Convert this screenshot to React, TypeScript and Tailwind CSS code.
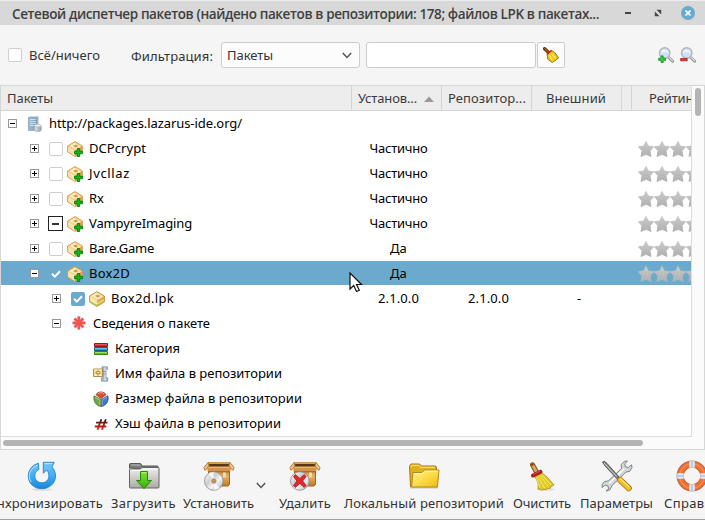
import { useLayoutEffect, useRef, useState, type ReactNode } from 'react';

/* Text that spreads its letters evenly over a given width. */
function Label({ children, w, className = '' }: { children: string; w: number; className?: string }) {
  const ref = useRef<HTMLSpanElement>(null);
  const [spacing, setSpacing] = useState(0);
  useLayoutEffect(() => {
    if (ref.current) setSpacing((w - ref.current.getBoundingClientRect().width) / children.length);
  }, [w, children]);
  return (
    <span ref={ref} className={`shrink-0 whitespace-pre ${className}`} style={{ letterSpacing: spacing }}>
      {children}
    </span>
  );
}

function Defs() {
  return (
    <svg className="absolute h-0 w-0">
      <defs>
        <linearGradient id="star" x1="0" y1="0" x2="0" y2="1"><stop stopColor="#cacaca" /><stop offset="1" stopColor="#b0b0b0" /></linearGradient>
        <linearGradient id="blue" x1="0" y1="0" x2="0" y2="1"><stop stopColor="#7cc8fb" /><stop offset=".5" stopColor="#43aef5" /><stop offset="1" stopColor="#1685dd" /></linearGradient>
        <linearGradient id="gray" x1="0" y1="0" x2="0" y2="1"><stop stopColor="#eeeeec" /><stop offset="1" stopColor="#aaaaa7" /></linearGradient>
        <linearGradient id="green" x1="0" y1="0" x2="0" y2="1"><stop stopColor="#80e52d" /><stop offset="1" stopColor="#35ae0a" /></linearGradient>
        <linearGradient id="yellow" x1="0" y1="0" x2="1" y2="1"><stop stopColor="#fff38a" /><stop offset=".5" stopColor="#fbdc4a" /><stop offset="1" stopColor="#efb90c" /></linearGradient>
        <linearGradient id="wood" x1="0" y1="0" x2="0" y2="1"><stop stopColor="#b87428" /><stop offset=".5" stopColor="#e3b064" /><stop offset="1" stopColor="#bd7927" /></linearGradient>
        <linearGradient id="disc" x1="0" y1="0" x2="1" y2="1"><stop stopColor="#fff" /><stop offset=".4" stopColor="#cfcfcf" /><stop offset=".6" stopColor="#f4f4f4" /><stop offset="1" stopColor="#aaa" /></linearGradient>
        <linearGradient id="server" x1="0" y1="0" x2="1" y2="0"><stop stopColor="#9dbbd2" /><stop offset="1" stopColor="#7d9fba" /></linearGradient>
        <linearGradient id="cyl" x1="0" y1="0" x2="1" y2="0"><stop stopColor="#dfe5ea" /><stop offset="1" stopColor="#93a1ad" /></linearGradient>
      </defs>
    </svg>
  );
}

function PackageIcon({ plus }: { plus?: boolean }) {
  return (
    <svg viewBox="0 0 16 16" className="h-4 w-4 shrink-0">
      <path d="M.6 5 8 .6 15.400 5v6L8 15.500.6 11z" fill={plus ? '#eebf6c' : '#ecca6e'} stroke={plus ? '#cf9a4c' : '#b8913c'} strokeWidth=".9" />
      <path d="M1.200 5.600 8 9.400v5.500L1.200 10.800z" fill="#fae3ae" />
      <path d="M8 9.400 14.900 5.600v5.200L8 14.900z" fill={plus ? '#dfa14b' : '#dcae4c'} />
      <path d="M1.600 5.200 8 1.400l6.400 3.800L8 8.800z" fill="#f8e2a8" />
      <path d="m3.800 4 6.300 3.600M6.200 2.600l6.300 3.600" fill="none" stroke="#fff8e0" strokeWidth="1.100" />
      <path d="M6 5 8.700 3.600l2.800 1.500-2.700 1.600z" fill="#d89c45" />
      {!plus && <path d="m1.300 10 6.700 3.700 6.800-3.700v1.100L8 15l-6.700-3.900z" fill="#9dcb44" />}
      {!plus && <path d="m1.300 9 6.700 3.900 6.800-3.900" fill="none" stroke="#fff2c0" strokeWidth=".8" />}
      {plus && <path d="M10.300 7.500h2.400v2.800h2.800v2.400h-2.800v2.800h-2.400v-2.800H7.500v-2.400h2.800z" fill="#12b81a" stroke="#067c10" strokeWidth=".9" />}
    </svg>
  );
}

function ServerIcon() {
  return (
    <svg viewBox="0 0 16 16" className="h-4 w-4 shrink-0">
      <path d="M2 1.200 3 .3h8l-.5 1z" fill="#c6d8e6" />
      <path d="M1.400 1.400h8.800v13H1.400z" fill="url(#server)" stroke="#84a3bb" strokeWidth=".8" />
      <path d="M10.200 1.400 11 .5v9" fill="none" stroke="#88a7bf" strokeWidth=".9" />
      <path d="M3 3.500h5.800M3 5.500h5.800M3 7.500h5.800M3 9.500h4" stroke="#d7e6f1" strokeWidth=".9" />
      <path d="M7.400 9.600v4.500c0 1.900 6.800 1.900 6.800 0V9.600z" fill="url(#cyl)" stroke="#9aa7b2" strokeWidth=".7" />
      <ellipse cx="10.800" cy="9.600" rx="3.400" ry="1.400" fill="#e9eef2" stroke="#a9b5bf" strokeWidth=".6" />
    </svg>
  );
}

function AsteriskIcon() {
  return (
    <svg viewBox="0 0 16 16" className="h-4 w-4 shrink-0">
      <path d="M8 1.300v13.500M1.500 8h13.200M3.500 3.500l9 9M12.500 3.500l-9 9" stroke="#c9bdbd" strokeWidth="3.300" />
      <path d="M7.800 1.600v12.600M1.700 7.900h12.400M3.500 3.500l8.600 8.600M12.100 3.500l-8.600 8.600" stroke="#f4534e" strokeWidth="2.300" />
    </svg>
  );
}

function CategoryIcon() {
  return (
    <svg viewBox="0 0 16 16" className="h-4 w-4 shrink-0">
      <path d="M1.500 2.500h13v3h-13z" fill="#e0202e" stroke="#a0141f" /><path d="M2 3.500h12" stroke="#f0606a" strokeWidth=".8" />
      <path d="M1.500 6.500h13v3h-13z" fill="#21a5db" stroke="#145f86" /><path d="M2 7.500h12" stroke="#70d2fb" strokeWidth=".8" />
      <path d="M1.500 10.500h13v3h-13z" fill="#61c329" stroke="#3b8014" /><path d="M2 11.500h12" stroke="#a5ec6c" strokeWidth=".8" />
    </svg>
  );
}

function ArchiveIcon() {
  return (
    <svg viewBox="0 0 16 16" className="h-4 w-4 shrink-0">
      <path d="M9 .8h5.500v2.400H13v8.600h1.800v3.400H8.500v-3.400H10V3.200H9z" fill="#a9bccd" stroke="#8095a8" strokeWidth=".8" />
      <path d="M12 1.500v13" stroke="#dfe8ef" strokeWidth="1.200" />
      <path d="M10 5.500h3M10 8h3" stroke="#7e93a6" strokeWidth=".8" />
      <path d="M.5 3h9v7.500h-9z" fill="#f3dc97" stroke="#a8823c" strokeWidth=".9" />
      <path d="M1.200 4h7.600M1.200 9.300h7.600" stroke="#fff4c8" /><path d="M5 3.500v6.500" stroke="#b8903f" strokeWidth=".8" />
      <path d="M3.200 5.700h3.600v2H3.200z" fill="#fff6d2" stroke="#8b6427" strokeWidth=".7" />
    </svg>
  );
}

function SizeIcon() {
  return (
    <svg viewBox="0 0 16 16" className="h-4 w-4 shrink-0">
      <path d="m8.300 8.500 6.600-3.700c1.200 5-1.500 9.700-6.600 10.700z" fill="#3f78c6" stroke="#28508c" strokeWidth=".8" />
      <path d="M7.700 8.500 1.100 4.800C0 9.800 2.600 14.500 7.700 15.500z" fill="#6fa644" stroke="#44702a" strokeWidth=".8" />
      <path d="M8 7.500 3 3.700C5 .1 11 .1 13 3.700z" fill="#dc4f35" stroke="#93301d" strokeWidth=".8" />
      <path d="M4.800 2.900c1.900-1.600 4.500-1.600 6.400 0" fill="none" stroke="#f6a48d" />
      <path d="m2 6.300 4.800 2.700v5.300" fill="none" stroke="#bfdca4" strokeWidth=".7" />
      <path d="M14 6.300 9.200 9v5.300" fill="none" stroke="#9fc0ec" strokeWidth=".7" />
    </svg>
  );
}

function HashIcon() {
  return (
    <svg viewBox="0 0 16 16" className="h-4 w-4 shrink-0">
      <defs><linearGradient id="hash" gradientUnits="userSpaceOnUse" x1="0" y1="3" x2="0" y2="14"><stop stopColor="#341818" /><stop offset="1" stopColor="#f42116" /></linearGradient></defs>
      <path d="M8.300 3.300 4.500 13.700M12.800 3.300 9 13.700M3 6.600h11.500M1.800 10.500h11.500" stroke="url(#hash)" strokeWidth="1.800" />
    </svg>
  );
}

function BroomSmall() {
  return (
    <svg viewBox="0 0 16 16" className="h-4 w-4">
      <path d="m1.600 1.700 3.800 3.600" stroke="#6e3a12" strokeWidth="3.400" strokeLinecap="round" />
      <path d="m1.700 1.500 3.300 3.200" stroke="#b5712e" strokeLinecap="round" />
      <path d="M4.200 7.200 8.700 3.600l3 1.800 4 5.600-6.400 4.600-4.600-3.400z" fill="#ecca1c" stroke="#8d6c10" strokeWidth=".9" />
      <path d="m6.600 8.300 2.600 4.800M8.800 6.800l3.700 4.600" stroke="#fbec68" strokeWidth="1.200" />
      <path d="m3.900 7.400 4.700-4" stroke="#cf2a1e" strokeWidth="1.500" />
    </svg>
  );
}

function Magnifier({ plus }: { plus?: boolean }) {
  return (
    <svg viewBox="0 0 16 16" className="h-4 w-4 shrink-0">
      <path d="m10.500 10.300 4.200 4" stroke="#8a8a8a" strokeWidth="2.700" strokeLinecap="round" />
      <path d="m10.500 10 4.200 4" stroke="#dedede" strokeWidth="1.100" strokeLinecap="round" />
      <circle cx="6.700" cy="6" r="5.200" fill="#cfe2f5" stroke="#b3b5ba" strokeWidth="1.400" />
      <path d="M3 6c.3-4.400 7-4.400 7.400 0-2.400-1.200-5-1.200-7.400 0z" fill="#eef6fd" />
      {plus ? (
        <path d="M3 8.900h2.200v2.300h2.300v2.200H5.200v2.300H3v-2.300H.7v-2.200H3z" fill="#39cb38" stroke="#15922a" strokeWidth=".8" />
      ) : (
        <path d="M.6 11.500h6.600v2.300H.6z" fill="#e1323d" stroke="#b3202a" strokeWidth=".8" />
      )}
    </svg>
  );
}

function Stars() {
  return (
    <svg viewBox="0 0 80 16" className="h-4 w-20 shrink-0">
      {[0, 16, 32, 48, 64].map((x) => (
        <path key={x} transform={`translate(${x} 0)`} d="M8 .4 10.300 5l5.300.8-3.600 4 1 5.700L8 13.300 3 15.500l1-5.700-3.600-4L5.700 5z" fill="url(#star)" stroke="url(#star)" strokeWidth=".9" strokeLinejoin="round" />
      ))}
    </svg>
  );
}

function SyncIcon() {
  return (
    <svg viewBox="0 0 32 32" className="h-8 w-8">
      <ellipse cx="16" cy="29.500" rx="10" ry="1.500" fill="#dcdcdc" />
      <path d="M12.500 3.200A13.300 13.300 0 0 0 2.200 16c0 7.200 6 12.700 13.600 12.700S29.500 23.200 29.500 16c0-3.600-1.300-6.600-3.600-8.900L28.200 2.300H17.300v11l3.300-3.300c1.500 1.600 2.300 3.500 2.300 5.800 0 4.200-3 7-7 7s-7.100-2.900-7.100-7c0-2.800 1.400-5.100 4-6.300z" fill="url(#blue)" stroke="#2482c4" strokeWidth=".9" />
      <path d="M11 5.300C3 9 1.300 17 5.300 22.200M18.500 3.500h7.600" fill="none" stroke="#b8e4ff" />
    </svg>
  );
}

function DownloadIcon() {
  return (
    <svg viewBox="0 0 32 32" className="h-8 w-8">
      <path d="M1.500 8V4.500q0-1 1-1H12q1 0 1.300 1l.5 1.500H29q1.200 0 1.200 1.200V10z" fill="#7d7f7c" stroke="#555753" />
      <path d="M3 5h9" stroke="#bbb" />
      <path d="M1.500 10q0-1 1-1h10l1.500-1.500h16q1 0 1 1V27q0 1-1 1H2.500q-1 0-1-1z" fill="url(#gray)" stroke="#656662" />
      <path d="M3 10.300h10L14.500 9h14.800" fill="none" stroke="#fff" />
      <path d="M12.500 11.500h7v9h4L16 28.700 8.500 20.500h4z" fill="url(#green)" stroke="#288608" />
      <path d="M13.600 12.600h4.800" stroke="#b7f985" />
    </svg>
  );
}

function BoxIcon({ remove }: { remove?: boolean }) {
  return (
    <svg viewBox="0 0 32 32" className="h-8 w-8">
      <path d="M5.500 7h21v17.500l-1.500 1.500H5.500z" fill="url(#wood)" stroke="#a8641d" />
      <path d="M5.500 2.500h21L27.500 7h-23z" fill="#5d3715" stroke="#a76c2c" />
      <path d="M5.500 2.300h21v1.600h-21z" fill="#e2ad62" />
      <path d="M4.500 6.800h23v4.600h-23z" fill="#d2934a" /><path d="M4.500 7.300h23" stroke="#f0c585" />
      <path d="M5.500 11.800h21" stroke="#9c5f1c" />
      <path d="M5 2.500 1 7.500l.8 2.700 2-1.200L6 5.500zM27 2.500l4 5-.8 2.700-2-1.200L26 5.500z" fill="#ecc389" stroke="#b77227" strokeWidth=".9" />
      <path d="M20 12.500h3v5h-3z" fill="#f2dbad" />
      <circle cx="10.800" cy="21" r="9.300" fill="url(#disc)" stroke="#8a8a8a" strokeWidth=".8" />
      {remove ? (
        <path d="m6.300 14.600 4.500 3.800 4.500-3.800 1.800 1.900-3.400 4.500 3.400 4.500-1.800 1.900-4.500-3.800-4.500 3.800-1.800-1.900L7.900 21l-3.400-4.500z" fill="#e0282e" stroke="#a71920" strokeWidth=".8" />
      ) : (
        <>
          <path d="m10 12 .8 9-5.300-8zM10.800 21l.8 9.200 5-2.200z" fill="#fff" opacity=".8" />
          <circle cx="10.800" cy="21" r="3.300" fill="#c5c5c5" stroke="#eee" strokeWidth=".7" />
          <circle cx="10.800" cy="21" r="2" fill="#ce9251" stroke="#8f7b60" strokeWidth=".6" />
        </>
      )}
    </svg>
  );
}

function FolderIcon() {
  return (
    <svg viewBox="0 0 32 32" className="h-8 w-8">
      <path d="M2 27h28v1.500H2z" fill="#c6c6c6" />
      <path d="M1.500 6.500 3 4h8.500l2 2H27q1.500 0 1.500 2v18.500h-26z" fill="#e0b11c" stroke="#a47715" />
      <path d="M2.800 7.300 3.800 5.300h7l2.200 2h14" fill="none" stroke="#ffec79" />
      <path d="M5 12.500h9l2.500-2.500H31l-1.600 17H3.500z" fill="url(#yellow)" stroke="#b8871a" />
      <path d="M6 13.700h8.600l2.400-2.500h12.700" fill="none" stroke="#fffac1" />
    </svg>
  );
}

function BroomIcon() {
  return (
    <svg viewBox="0 0 32 32" className="h-8 w-8">
      <ellipse cx="20" cy="29.500" rx="9" ry="1.300" fill="#ddd" />
      <path d="m6.500 4.800 4.200 7.700" stroke="#875015" strokeWidth="5" strokeLinecap="round" />
      <path d="m6.300 4.600 4.200 7.400" stroke="#d7a766" strokeWidth="3" strokeLinecap="round" />
      <circle cx="6.300" cy="4.600" r="1.300" fill="#724315" />
      <path d="m8.500 16.500 7.700-3.500 5.300 4.500 6.500 7.500-3 1.500-.7 1.800-3 .2-1 1.300-2.400-.6-2 1-1.500-.9-2.400-.1c.6-4.500-.1-8.500-3.500-12.700z" fill="#e0c928" stroke="#a98b19" strokeWidth=".8" />
      <path d="m10.500 18 3.500 10M12.500 17.500l6 10.500M14.500 16l7.500 10.500M16 15l9 10" stroke="#f7ee72" strokeWidth=".9" />
      <path d="m7 15.500 7.500-3.700" stroke="#a81d24" strokeWidth="4" strokeLinecap="round" />
      <path d="m7 14.600 7-3.500" stroke="#ea5a52" strokeWidth=".9" />
    </svg>
  );
}

function ToolsIcon() {
  return (
    <svg viewBox="0 0 32 32" className="h-8 w-8">
      <path d="M8.800 30 11 25.500 25 12l3.700-.6L31 7.500l-.5-2.700-3.200 2.700-3-.8-.5-3L26.500 1l-3.300.4-3 3.300.3 3.800L7.300 21l-3.600.4-2.500 3L1 27.500l3.200-2.300 2.800.8.600 3L5 31z" fill="#d3d7d8" stroke="#70777b" strokeWidth=".9" />
      <path d="M8 23.500 23.200 8.800" stroke="#fff" strokeWidth="1.500" />
      <path d="m1.500 2 2-.6 2.500 2L18 17l-2 1.800L4 5.800z" fill="#8a8a8a" stroke="#393939" strokeWidth=".8" />
      <path d="m3 3 12.700 13.500" stroke="#e4e4e4" strokeWidth=".8" />
      <path d="m19 20 8.800 8.300" stroke="#9a7115" strokeWidth="6" strokeLinecap="round" />
      <path d="m19 20 8.800 8.300" stroke="#f2bd22" strokeWidth="4.600" strokeLinecap="round" />
      <path d="m19.500 18.900 8.500 8" stroke="#fff08a" strokeWidth="1.300" strokeLinecap="round" />
    </svg>
  );
}

function HelpIcon() {
  return (
    <svg viewBox="0 0 32 32" className="h-8 w-8">
      <circle cx="16" cy="16" r="15" fill="none" stroke="#aaa" strokeWidth="1.100" />
      <circle cx="16" cy="16" r="11.700" fill="none" stroke="#bf582a" strokeWidth="6.800" />
      <circle cx="16" cy="16" r="11.700" fill="none" stroke="#ee7033" strokeWidth="5.600" />
      <circle cx="16" cy="16" r="12.400" fill="none" stroke="#f99a66" strokeWidth="1" />
      <path d="M16 1.300v6.400M16 24.300v6.400M1.300 16h6.400M24.300 16h6.400" stroke="#e3ebf7" strokeWidth="5.600" />
      <path d="M16 1.300v6.400M16 24.300v6.400M1.300 16h6.400M24.300 16h6.400" stroke="#a9c5eb" strokeWidth="1.500" />
    </svg>
  );
}

const Chevron = () => (
  <svg viewBox="0 0 10 7" className="h-[7px] w-[10px] shrink-0"><path d="m.8 1 4.200 4.400L9.200 1" fill="none" stroke="#555" strokeWidth="1.500" /></svg>
);

function Expander({ open }: { open?: boolean }) {
  return (
    <svg viewBox="0 0 9 9" className="h-[9px] w-[9px] shrink-0" shapeRendering="crispEdges">
      <path d="M.5.500h8v8h-8z" fill="#fff" stroke="#999" />
      <path d={open ? 'M2 4.500h5' : 'M2 4.500h5M4.500 2v5'} stroke="#000" />
    </svg>
  );
}

type Check = 'off' | 'on' | 'mixed';
function CheckBox({ state }: { state: Check }) {
  if (state === 'mixed')
    return <span className="-ml-px flex h-[15px] w-[15px] shrink-0 items-center justify-center border border-[#222] bg-white"><span className="h-[2px] w-[7px] bg-[#333]" /></span>;
  if (state === 'off') return <span className="h-[14px] w-[14px] shrink-0 rounded-[2px] border border-[#cfcfcf] bg-white" />;
  return (
    <span className="flex h-[14px] w-[14px] shrink-0 items-center justify-center rounded-[2px] bg-[#6caacd]">
      <svg viewBox="0 0 10 8" className="h-2 w-[10px]"><path d="m1 3.800 2.800 2.800L9 1.300" fill="none" stroke="#fff" strokeWidth="2" /></svg>
    </span>
  );
}

function Row({ indent, children, status, statusW = 0, repo, ext, rating, selected }: { indent: string; children: ReactNode; status?: string; statusW?: number; repo?: string; ext?: string; rating?: boolean; selected?: boolean }) {
  return (
    <div className={`mb-px grid h-6 shrink-0 grid-cols-[351px_90px_90px_100px_59px] items-center ${selected ? 'bg-[#6caacd]' : ''}`}>
      <div className={`flex items-center ${indent}`}>{children}</div>
      <div className="flex justify-center pl-[3px]">{status && <Label w={statusW}>{status}</Label>}</div>
      <div className="flex justify-center pl-[3px]">{repo && <Label w={41}>{repo}</Label>}</div>
      <div className="flex pl-[45px]">{ext}</div>
      <div className="flex overflow-hidden pt-px pl-[6px]">{rating && <Stars />}</div>
    </div>
  );
}

const packages: { name: string; w: number; check: Check; status: string; statusW: number }[] = [
  { name: 'DCPcrypt', w: 57, check: 'off', status: 'Частично', statusW: 58 },
  { name: 'Jvcllaz', w: 41, check: 'off', status: 'Частично', statusW: 58 },
  { name: 'Rx', w: 15, check: 'off', status: 'Частично', statusW: 58 },
  { name: 'VampyreImaging', w: 103, check: 'mixed', status: 'Частично', statusW: 58 },
  { name: 'Bare.Game', w: 65, check: 'off', status: 'Да', statusW: 17 },
  { name: 'Box2D', w: 41, check: 'on', status: 'Да', statusW: 17 },
];

const details = [
  { name: 'Категория', w: 65, icon: <CategoryIcon /> },
  { name: 'Имя файла в репозитории', w: 167, icon: <ArchiveIcon /> },
  { name: 'Размер файла в репозитории', w: 187, icon: <SizeIcon /> },
  { name: 'Хэш файла в репозитории', w: 166, icon: <HashIcon /> },
];

function Tool({ icon, text, w, gap }: { icon: ReactNode; text: string; w: number; gap: string }) {
  return (
    <div className={`flex shrink-0 flex-col items-center ${gap}`}>
      {icon}
      <Label w={w} className="mt-px leading-5">{text}</Label>
    </div>
  );
}

export default function App() {
  return (
    <div className="relative flex h-[520px] w-[705px] flex-col overflow-hidden border-b border-[#a0a0a0] bg-[#f5f5f5] font-['Noto_Sans','Open_Sans',sans-serif] text-[13px] leading-5 text-[#333]">
      <Defs />
      <header className="flex h-[25px] shrink-0 items-center border-t border-[#eee] bg-[#d8d8d8] pl-3">
        <Label w={587} className="mt-px font-['Open_Sans','Noto_Sans',sans-serif] text-[13.5px] font-semibold text-[#3f3f3f]">Сетевой диспетчер пакетов (найдено пакетов в репозитории: 178; файлов LPK в пакетах...</Label>
        <span className="ml-[26px] h-[2px] w-[6px] bg-[#444]" />
        <svg viewBox="0 0 8 8" className="ml-[23px] h-2 w-2"><path d="M2.500.800h4.700v4.700zM.8 2.500v4.700h4.700z" fill="#444" /><path d="m1.500 1.500 5 5" stroke="#d8d8d8" strokeWidth="1.200" /></svg>
        <svg viewBox="0 0 14 14" className="ml-[19px] h-[14px] w-[14px]"><circle cx="7" cy="7" r="7" fill="#6caacd" /><path d="m4.500 4.500 5 5m0-5-5 5" stroke="#fff" strokeWidth="1.700" /></svg>
      </header>

      <div className="flex h-[60px] shrink-0 items-center pl-2">
        <CheckBox state="off" />
        <Label w={71} className="ml-[7px]">Всё/ничего</Label>
        <Label w={82} className="ml-[31px] mt-px">Фильтрация:</Label>
        <div className="ml-2 flex h-[26px] w-[139px] items-center justify-between rounded-[3px] border border-[#ccc] bg-[#fcfcfc] pr-[7px] pl-[5px]">
          <Label w={46}>Пакеты</Label>
          <Chevron />
        </div>
        <div className="ml-[6px] h-[26px] w-[170px] rounded-[3px] border border-[#ccc] bg-white" />
        <div className="ml-px flex h-[26px] w-[28px] items-center justify-center rounded-[2px] border border-[#ccc] bg-[#fcfcfc]"><BroomSmall /></div>
        <div className="ml-[93px] flex gap-[6px]"><Magnifier plus /><Magnifier /></div>
      </div>

      <main className="flex h-[365px] shrink-0 flex-col border border-[#d6d6d6]">
        <div className="flex h-[351px] shrink-0">
          <div className="flex w-[690px] flex-col overflow-hidden border-b border-[#dcdcdc] bg-white text-black">
            <div className="grid h-[25px] shrink-0 grid-cols-[351px_90px_90px_90px_10px_59px] border-b border-[#d4d4d4] bg-[#ededed] leading-[25px] text-[#3a3a3a]">
              <div className="flex border-r border-[#d4d4d4] pl-[6px]"><Label w={46}>Пакеты</Label></div>
              <div className="flex items-center border-r border-[#d4d4d4] pl-[6px]">
                <Label w={59}>Установ...</Label>
                <svg viewBox="0 0 10 6" className="ml-[7px] h-[6px] w-[10px]"><path d="m0 6 5-5.500L10 6z" fill="#999" /></svg>
              </div>
              <div className="flex border-r border-[#d4d4d4] pl-[6px]"><Label w={78}>Репозитор...</Label></div>
              <div className="flex border-r border-[#d4d4d4] pl-[14px]"><Label w={60}>Внешний</Label></div>
              <div className="border-r border-[#d4d4d4]" />
              <div className="flex overflow-hidden pl-[17px]"><Label w={50}>Рейтинг</Label></div>
            </div>
            <Row indent="pl-[7px]"><Expander open /><span className="ml-[10px] flex pt-px"><ServerIcon /></span><Label w={193} className="ml-[6px]">http://packages.lazarus-ide.org/</Label></Row>
            {packages.map((p) => (
              <Row key={p.name} indent="pl-[29px]" status={p.status} statusW={p.statusW} rating selected={p.check === 'on'}>
                <Expander open={p.check === 'on'} />
                <span className="ml-[10px] flex w-[14px] pt-px"><CheckBox state={p.check} /></span>
                <span className="ml-1 flex pt-px"><PackageIcon plus /></span>
                <Label w={p.w} className="ml-[6px]">{p.name}</Label>
              </Row>
            ))}
            <Row indent="pl-[51px]" status="2.1.0.0" statusW={41} repo="2.1.0.0" ext="-">
              <Expander />
              <span className="ml-[10px] flex pt-px"><CheckBox state="on" /></span>
              <span className="ml-1 flex pt-px"><PackageIcon /></span>
              <Label w={63} className="ml-[6px]">Box2d.lpk</Label>
            </Row>
            <Row indent="pl-[51px]"><Expander open /><span className="ml-[10px] flex"><AsteriskIcon /></span><Label w={117} className="ml-[6px]">Сведения о пакете</Label></Row>
            {details.map((d) => (
              <Row key={d.name} indent="pl-[92px]"><span className="flex pt-px">{d.icon}</span><Label w={d.w} className="ml-[6px]">{d.name}</Label></Row>
            ))}
          </div>
          <div className="flex-1 border-l border-[#dcdcdc] bg-[#fbfbfb] pt-[2px] pl-[3px]"><div className="h-7 w-[6px] rounded-full bg-[#b4b4b4]" /></div>
        </div>
        <div className="flex flex-1 items-center bg-[#fbfbfb] pl-[2px]"><div className="h-[6px] w-[640px] rounded-full bg-[#b4b4b4]" /></div>
      </main>

      <footer className="flex flex-1 pt-[10px]">
        <Tool icon={<SyncIcon />} text="Синхронизировать" w={123} gap="-ml-5" />
        <Tool icon={<DownloadIcon />} text="Загрузить" w={65} gap="ml-2" />
        <Tool icon={<BoxIcon />} text="Установить" w={71} gap="ml-[7px]" />
        <span className="ml-[2px] flex h-[50px] items-center"><Chevron /></span>
        <Tool icon={<BoxIcon remove />} text="Удалить" w={52} gap="ml-[13px]" />
        <Tool icon={<FolderIcon />} text="Локальный репозиторий" w={160} gap="ml-[13px]" />
        <Tool icon={<BroomIcon />} text="Очистить" w={58} gap="ml-[9px]" />
        <Tool icon={<ToolsIcon />} text="Параметры" w={73} gap="ml-[9px]" />
        <Tool icon={<HelpIcon />} text="Справка" w={55} gap="ml-[11px]" />
      </footer>

      <svg viewBox="0 0 14 21" className="absolute top-[272px] left-[349px] h-[21px] w-[14px]">
        <path d="M1 1v16l3.700-3.500 2.800 6 2.800-1.300-2.800-5.700h5z" fill="#fff" stroke="#111" strokeWidth="1.200" />
      </svg>
    </div>
  );
}
